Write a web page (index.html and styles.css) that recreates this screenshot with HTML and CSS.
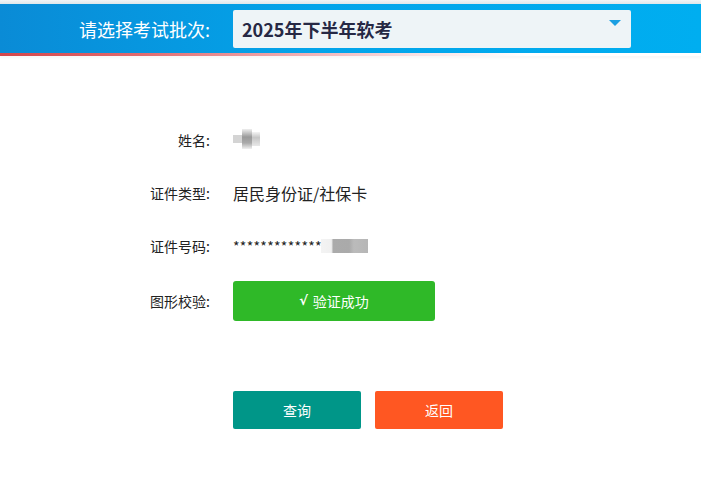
FILE: index.html
```html
<!DOCTYPE html>
<html lang="zh-CN">
<head>
<meta charset="utf-8">
<link rel="stylesheet" href="styles.css">
</head>
<body>
<div class="top-strip"></div>
<header class="bar">
  <div class="bar-label">请选择考试批次:</div>
  <div class="select">
    <span class="select-text">2025年下半年软考</span>
    <span class="caret"></span>
  </div>
</header>
<div class="red-line"></div>
<main class="form">
  <div class="row">
    <div class="label">姓名:</div>
    <div class="value"><span class="blur blur-name"><i class="p1"></i><i class="p2"></i><i class="p3"></i></span></div>
  </div>
  <div class="row">
    <div class="label">证件类型:</div>
    <div class="value">居民身份证/社保卡</div>
  </div>
  <div class="row">
    <div class="label">证件号码:</div>
    <div class="value id">*************<span class="blur blur-id"></span></div>
  </div>
  <div class="row row-verify">
    <div class="label">图形校验:</div>
    <div class="value"><div class="verified"><span class="check">√</span><span>验证成功</span></div></div>
  </div>
  <div class="actions">
    <button class="btn btn-query">查询</button>
    <button class="btn btn-back">返回</button>
  </div>
</main>
</body>
</html>
```
FILE: styles.css
```css
* { box-sizing: border-box; }
html, body { margin: 0; padding: 0; background: #fff; }
body {
  font-family: "Noto Sans CJK SC", "Microsoft YaHei", sans-serif;
  color: #333;
  width: 701px;
  height: 480px;
  overflow: hidden;
}
.top-strip {
  height: 4px;
  background: linear-gradient(#f2f4f6, #dfe6ea);
}
.bar {
  height: 49px;
  background: linear-gradient(90deg, #0a8bd6 0%, #03a4ea 45%, #00aef0 100%);
  display: flex;
  align-items: center;
}
.bar-label {
  width: 233px;
  padding-left: 79px;
  color: #fff;
  font-size: 18px;
}
.select {
  width: 398px;
  height: 38px;
  background: #eef4f7;
  border-radius: 2px;
  display: flex;
  align-items: center;
  padding-left: 9px;
  position: relative;
}
.select-text {
  font-size: 18px;
  font-weight: 700;
  color: #262844;
}
.caret {
  position: absolute;
  right: 10px;
  top: 10px;
  width: 0;
  height: 0;
  border-left: 6px solid transparent;
  border-right: 6px solid transparent;
  border-top: 6px solid #1b9fe2;
}
.red-line {
  height: 3px;
  background: linear-gradient(90deg, #d2464b 0%, #e06a6e 20%, #f0b5b9 45%, #f8e2e4 60%, rgba(255,255,255,0) 75%);
  box-shadow: 0 2px 3px rgba(0,0,0,0.04);
}
.form {
  padding-top: 67px;
}
.row {
  display: flex;
  align-items: center;
  height: 33px;
  margin-bottom: 20px;
}
.row-verify {
  margin-top: 22px;
}
.label {
  width: 210px;
  text-align: right;
  font-size: 14px;
  color: #222;
}
.value {
  margin-left: 23px;
  font-size: 16px;
  color: #222;
  display: flex;
  align-items: center;
}
.value.id {
  font-size: 14px;
  letter-spacing: 0.3px;
}
.blur { display: inline-block; }
.blur-name {
  display: flex;
  width: 27px;
  height: 20px;
  position: relative;
  margin-top: -2px;
}
.blur-name i { display: block; position: absolute; }
.blur-name .p1 { left: 0; top: 6px; width: 10px; height: 8px; background: #d4d4d4; }
.blur-name .p2 { left: 9px; top: 0; width: 10px; height: 20px; background: linear-gradient(#eeeeee, #999 40%, #aaa 70%, #f0f0f0); }
.blur-name .p3 { left: 19px; top: 3px; width: 8px; height: 14px; background: linear-gradient(#f4f4f4, #c6c6c6 40%, #e8e8e8); }
.blur-id {
  width: 47px;
  height: 14px;
  margin-left: -1px;
  background: linear-gradient(90deg, #f3f3f3 0%, #f0f0f0 22%, #ababab 26%, #aaa 60%, #bbb 70%, #b6b6b6 100%);
}
.verified {
  width: 202px;
  height: 40px;
  background: #2fb928;
  border-radius: 3px;
  color: #fff;
  font-size: 14px;
  display: flex;
  align-items: center;
  justify-content: center;
}
.check {
  font-family: "DejaVu Sans", sans-serif;
  font-size: 13px;
  font-weight: 700;
  margin-right: 5px;
}
.actions {
  display: flex;
  gap: 14px;
  padding-left: 233px;
  margin-top: 74px;
}
.btn {
  width: 128px;
  height: 38px;
  border: none;
  border-radius: 2px;
  color: #fff;
  font-family: inherit;
  font-size: 14px;
  padding: 0;
}
.btn-query { background: #009688; }
.btn-back { background: #ff5722; }
```
